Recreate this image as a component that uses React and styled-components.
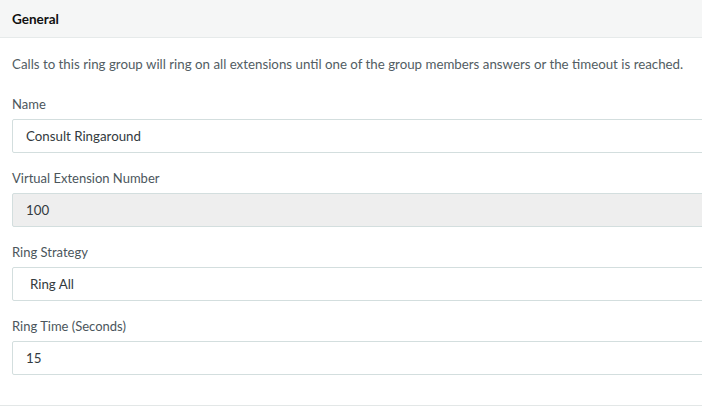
import React from 'react';
import styled, { createGlobalStyle } from 'styled-components';

const GlobalStyle = createGlobalStyle`
  html, body { margin: 0; padding: 0; background: #fff; overflow: hidden; }
  body { font-family: Lato, "Open Sans", sans-serif; }
`;

const FIELDS = [
  { id: 'name', label: 'Name', value: 'Consult Ringaround' },
  { id: 'ext', label: 'Virtual Extension Number', value: '100', disabled: true },
  { id: 'strategy', label: 'Ring Strategy', value: 'Ring All', select: true },
  { id: 'time', label: 'Ring Time (Seconds)', value: '15' },
];

export default function App() {
  return (
    <Panel>
      <GlobalStyle />
      <PanelHeader>General</PanelHeader>
      <PanelBody>
        <Intro>
          Calls to this ring group will ring on all extensions until one of the group members answers or the timeout is reached.
        </Intro>
        {FIELDS.map(f => (
          <Field key={f.id}>
            <Label htmlFor={f.id}>{f.label}</Label>
            <Input id={f.id} $disabled={f.disabled} $select={f.select}>{f.value}</Input>
          </Field>
        ))}
      </PanelBody>
      <PanelFooter />
    </Panel>
  );
}

const Panel = styled.div`
  width: 730px;
  height: 406px;
  display: flex;
  flex-direction: column;
`;

const PanelHeader = styled.div`
  height: 38px;
  box-sizing: border-box;
  display: flex;
  align-items: center;
  padding: 0 12px;
  background: #f5f6f6;
  border-bottom: 1px solid #e6eaea;
  font-size: 13.5px;
  font-weight: 700;
  color: #111;
`;

const PanelBody = styled.div`
  flex: 1;
  padding: 16px 0 0 12px;
  display: flex;
  flex-direction: column;
`;

const Intro = styled.p`
  margin: 0 0 20px;
  font-size: 13.3px;
  line-height: 20px;
  color: #525d63;
`;

const Field = styled.div`
  display: flex;
  flex-direction: column;
  margin-bottom: 15px;
`;

const Label = styled.label`
  font-size: 13px;
  line-height: 20px;
  color: #4b565c;
  margin-bottom: 5px;
`;

const Input = styled.div`
  height: 34px;
  box-sizing: border-box;
  display: flex;
  align-items: center;
  padding-left: ${p => (p.$select ? '17px' : '13px')};
  border: 1px solid #d3dede;
  border-radius: 2px;
  background: ${p => (p.$disabled ? '#eeeeee' : '#fff')};
  font-size: 13.3px;
  color: #333a3e;
`;

const PanelFooter = styled.div`
  height: 1px;
  background: #e3e7e7;
`;
